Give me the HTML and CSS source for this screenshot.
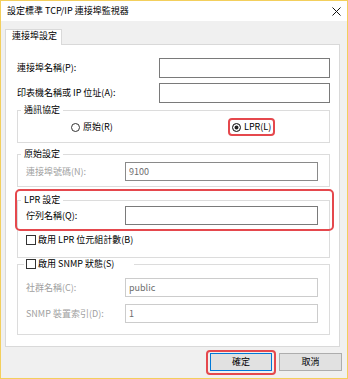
FILE: index.html
```html
<!DOCTYPE html>
<html lang="zh-Hant">
<head>
    <meta charset="UTF-8">
    <meta name="viewport" content="width=device-width, initial-scale=1.0">
    <title>設定標準 TCP/IP 連接埠監視器</title>
    <link rel="stylesheet" href="styles.css">
</head>
<body>
    <div class="window">
        <!-- Title Bar -->
        <div class="titlebar">
            <span class="title">設定標準 TCP/IP 連接埠監視器</span>
            <svg class="close" width="9" height="9" viewBox="0 0 9 9">
                <path d="M0.5 0.5 L8.5 8.5 M8.5 0.5 L0.5 8.5" stroke="#111" stroke-width="1" fill="none"/>
            </svg>
        </div>

        <!-- Tabs -->
        <div class="tabs">
            <div class="tab">連接埠設定</div>
        </div>

        <!-- Tab Panel -->
        <div class="panel">
            <div class="row">
                <label>連接埠名稱(P):</label>
                <input class="field wide" type="text">
            </div>
            <div class="row">
                <label>印表機名稱或 IP 位址(A):</label>
                <input class="field wide" type="text">
            </div>

            <fieldset class="group protocol">
                <legend>通訊協定</legend>
                <div class="radios">
                    <label class="radio"><span class="dot"></span>原始(R)</label>
                    <span class="mark-radio">
                        <label class="radio"><span class="dot checked"></span>LPR(L)</label>
                    </span>
                </div>
            </fieldset>

            <fieldset class="group port">
                <legend>原始設定</legend>
                <div class="row">
                    <label class="disabled">連接埠號碼(N):</label>
                    <input class="field inner dim" type="text" value="9100" readonly>
                </div>
            </fieldset>

            <fieldset class="group lpr">
                <legend>LPR 設定</legend>
                <div class="row">
                    <label>佇列名稱(Q):</label>
                    <input class="field inner" type="text">
                </div>
                <label class="check"><span class="box"></span>啟用 LPR 位元組計數(B)</label>
            </fieldset>

            <fieldset class="group snmp">
                <legend class="check-legend"><span class="box"></span>啟用 SNMP 狀態(S)</legend>
                <div class="row">
                    <label class="disabled">社群名稱(C):</label>
                    <input class="field inner off" type="text" value="public" readonly>
                </div>
                <div class="row">
                    <label class="disabled">SNMP 裝置索引(D):</label>
                    <input class="field inner off" type="text" value="1" readonly>
                </div>
            </fieldset>

            <!-- Highlight over the LPR settings -->
            <div class="highlight"></div>
        </div>

        <!-- Dialog Buttons -->
        <div class="buttons">
            <span class="mark-btn"><button class="btn default">確定</button></span>
            <button class="btn cancel">取消</button>
        </div>
    </div>
</body>
</html>
```

FILE: styles.css
```css
/* General Styles */
* {
    box-sizing: border-box;
}

body {
    margin: 0;
    font-family: "Noto Sans CJK TC", "Noto Sans", sans-serif;
    font-size: 9px;
    line-height: 12px;
    color: #000;
}

/* Window */
.window {
    width: 348px;
    height: 379px;
    border: 1px solid #f3cf5c;
    background: #f0f0f0;
    display: flex;
    flex-direction: column;
}

.titlebar {
    height: 20px;
    background: #fff;
    display: flex;
    align-items: center;
    justify-content: space-between;
    padding: 0 6px;
}

.close {
    display: block;
}

/* Tabs */
.tabs {
    display: flex;
    padding: 8px 0 0 4px;
}

.tab {
    position: relative;
    z-index: 1;
    width: 57px;
    height: 16px;
    margin-bottom: -1px;
    padding: 0 0 0 6px;
    background: #fff;
    border: 1px solid #d9d9d9;
    border-bottom: none;
}

/* Panel */
.panel {
    position: relative;
    margin: 0 7px 0 4px;
    padding: 13px 9px 11px 11px;
    background: #fff;
    border: 1px solid #d9d9d9;
}

.row {
    display: flex;
    justify-content: space-between;
    align-items: center;
}

.row + .row {
    margin-top: 5px;
}

.field {
    margin: 0;
    padding: 0 3px;
    font: inherit;
    color: #000;
    background: #fff;
    border: 1px solid #7a7a7a;
    border-radius: 0;
    outline: none;
}

.field.wide {
    width: 171px;
    height: 20px;
}

.field.inner {
    width: 193px;
    height: 19px;
}

.field.dim {
    color: #6d6d6d;
    border-color: #8a8a8a;
}

.field.off {
    color: #6d6d6d;
    border-color: #cccccc;
}

.disabled {
    color: #a0a0a0;
}

/* Group Boxes */
.group {
    margin: 0;
    min-width: 0;
    border: 1px solid #dcdcdc;
    padding: 0 11px 11px 8px;
}

.group legend {
    margin-left: -5px;
    padding: 0 3px;
    line-height: 12px;
}

.protocol {
    margin-top: 1px;
    padding: 5px 0 9px 0;
}

.protocol legend {
    margin-left: 3px;
}

.radios {
    display: grid;
    grid-template-columns: 161px auto;
    padding-left: 53px;
}

.radio,
.check {
    display: flex;
    align-items: center;
    gap: 3px;
}

.dot {
    width: 9px;
    height: 9px;
    border: 1px solid #333;
    border-radius: 50%;
    background: #fff;
}

.dot.checked {
    background: #222;
    box-shadow: inset 0 0 0 1.5px #fff;
}

.mark-radio {
    justify-self: start;
    margin: -3px -4px;
    padding: 1px 2px;
    border: 2px solid #e5484d;
    border-radius: 4px;
}

.port {
    margin-top: 5px;
    padding: 2px 11px 5px 8px;
}

.lpr {
    margin-top: 7px;
}

.lpr .check {
    margin-top: 9px;
    gap: 2px;
}

.box {
    width: 10px;
    height: 10px;
    border: 1px solid #333;
    background: #fff;
}

.snmp {
    padding-top: 8px;
}

.snmp .row + .row {
    margin-top: 7px;
}

.group .check-legend {
    display: flex;
    align-items: center;
    gap: 2px;
    margin-left: -2px;
    padding: 0 20px 0 2px;
}

/* Highlight */
.highlight {
    position: absolute;
    left: 9px;
    top: 144px;
    width: 319px;
    height: 42px;
    border: 2px solid #e5484d;
    border-radius: 5px;
}

/* Buttons */
.buttons {
    display: flex;
    justify-content: flex-end;
    gap: 7px;
    padding: 6px 5px 0 0;
}

.btn {
    height: 18px;
    margin: 0;
    padding: 0;
    font: inherit;
    color: #000;
    background: #e1e1e1;
    border: 1px solid #adadad;
}

.btn.default {
    display: block;
    width: 62px;
    border-color: #0078d7;
}

.btn.cancel {
    width: 63px;
}

.mark-btn {
    display: flex;
    margin: -3px -4px -4px -4px;
    padding: 1px 2px 2px 2px;
    border: 2px solid #e5484d;
    border-radius: 4px;
}
```
